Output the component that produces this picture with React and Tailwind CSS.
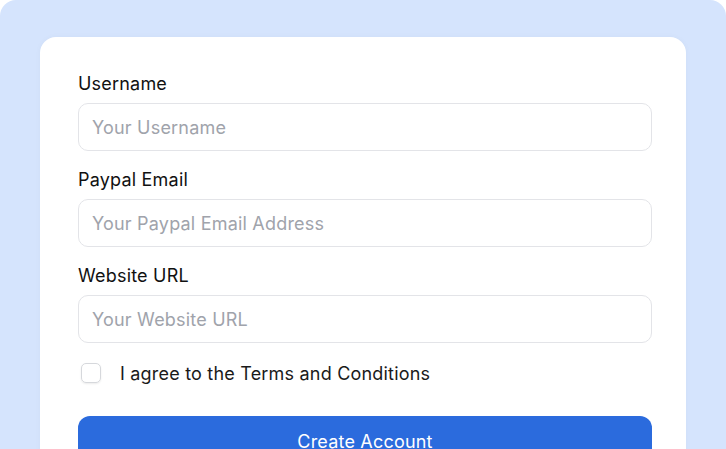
export default function App() {
  const fields = [
    { label: "Username", ph: "Your Username" },
    { label: "Paypal Email", ph: "Your Paypal Email Address" },
    { label: "Website URL", ph: "Your Website URL" },
  ];
  return (
    <div className="w-[726px] h-[449px] overflow-hidden bg-[#d5e4fd] rounded-t-[16px] pt-[37px] px-[40px]" style={{ fontFamily: "Inter, 'Noto Sans', sans-serif" }}>
      <div className="bg-white rounded-t-[16px] h-[430px] pt-[33px] pl-[38px] pr-[34px] shadow-[0_0_6px_rgba(0,0,0,0.03)] tracking-[0.2px]">
        <div className="flex flex-col gap-[15px]">
          {fields.map((f) => (
            <div key={f.label} className="flex flex-col">
              <label className="text-[18px] leading-[28px] text-[#111111] mb-[5px]">{f.label}</label>
              <div className="h-[48px] rounded-[10px] border border-[#e3e4e8] flex items-center pl-[13px] text-[18px] text-[#a0a3ab]">
                {f.ph}
              </div>
            </div>
          ))}
        </div>
        <div className="flex items-center mt-[16px] h-[28px]">
          <div className="w-[20px] h-[20px] ml-[3px] rounded-[5px] border border-[#d6d8dc] shadow-[0_1px_2px_rgba(0,0,0,0.08)]" />
          <span className="ml-[19px] text-[18px] text-[#1a1a1a]">I agree to the Terms and Conditions</span>
        </div>
        <div className="mt-[29px] h-[48px] rounded-[12px] bg-[#2b6bdd] flex items-center justify-center text-white text-[18px] pt-[2px]">
          Create Account
        </div>
      </div>
    </div>
  );
}
